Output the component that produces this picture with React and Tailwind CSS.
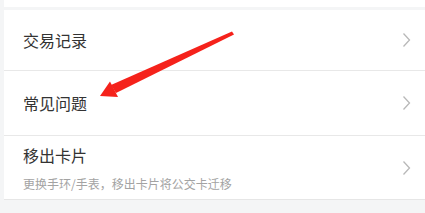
import React from "react";

function Chevron() {
  return (
    <svg width="9" height="16" viewBox="0 0 9 16" className="shrink-0">
      <polyline points="1.5,1.5 7.5,8 1.5,14.5" fill="none" stroke="#b8b8b8" strokeWidth="1.3" />
    </svg>
  );
}

function Row({ title, sub, className }) {
  return (
    <div className={"flex items-center justify-between pl-[19px] pr-[14px] " + className}>
      <div className="flex flex-col">
        <span className="text-[16px] leading-[20px] text-[#333333]">{title}</span>
        {sub && <span className="mt-[12px] text-[12px] leading-[14px] text-[#a3a3a3]">{sub}</span>}
      </div>
      <Chevron />
    </div>
  );
}

export default function App() {
  return (
    <div className="relative w-[425px] h-[213px] overflow-hidden bg-[#f4f5f6] pl-[4px] font-['Noto_Sans_CJK_SC',sans-serif]">
      <div className="h-[7px] bg-white" />
      <div className="h-[3px]" />
      <div className="bg-white">
        <Row title="交易记录" className="h-[61px] border-b border-[#e8e8e8]" />
        <Row title="常见问题" className="h-[65px] border-b border-[#e8e8e8]" />
        <Row
          title="移出卡片"
          sub="更换手环/手表，移出卡片将公交卡迁移"
          className="h-[64px] border-b border-[#e6e6e6] pt-[1px]"
        />
      </div>

      {/* annotation arrow */}
      <svg className="absolute left-0 top-0 pointer-events-none" width="425" height="213">
        <polygon points="232,31.5 234,34.5 116,93 111,85" fill="#f5221b" />
        <polygon points="100,96 110,81.5 118,97" fill="#f5221b" />
      </svg>
    </div>
  );
}
